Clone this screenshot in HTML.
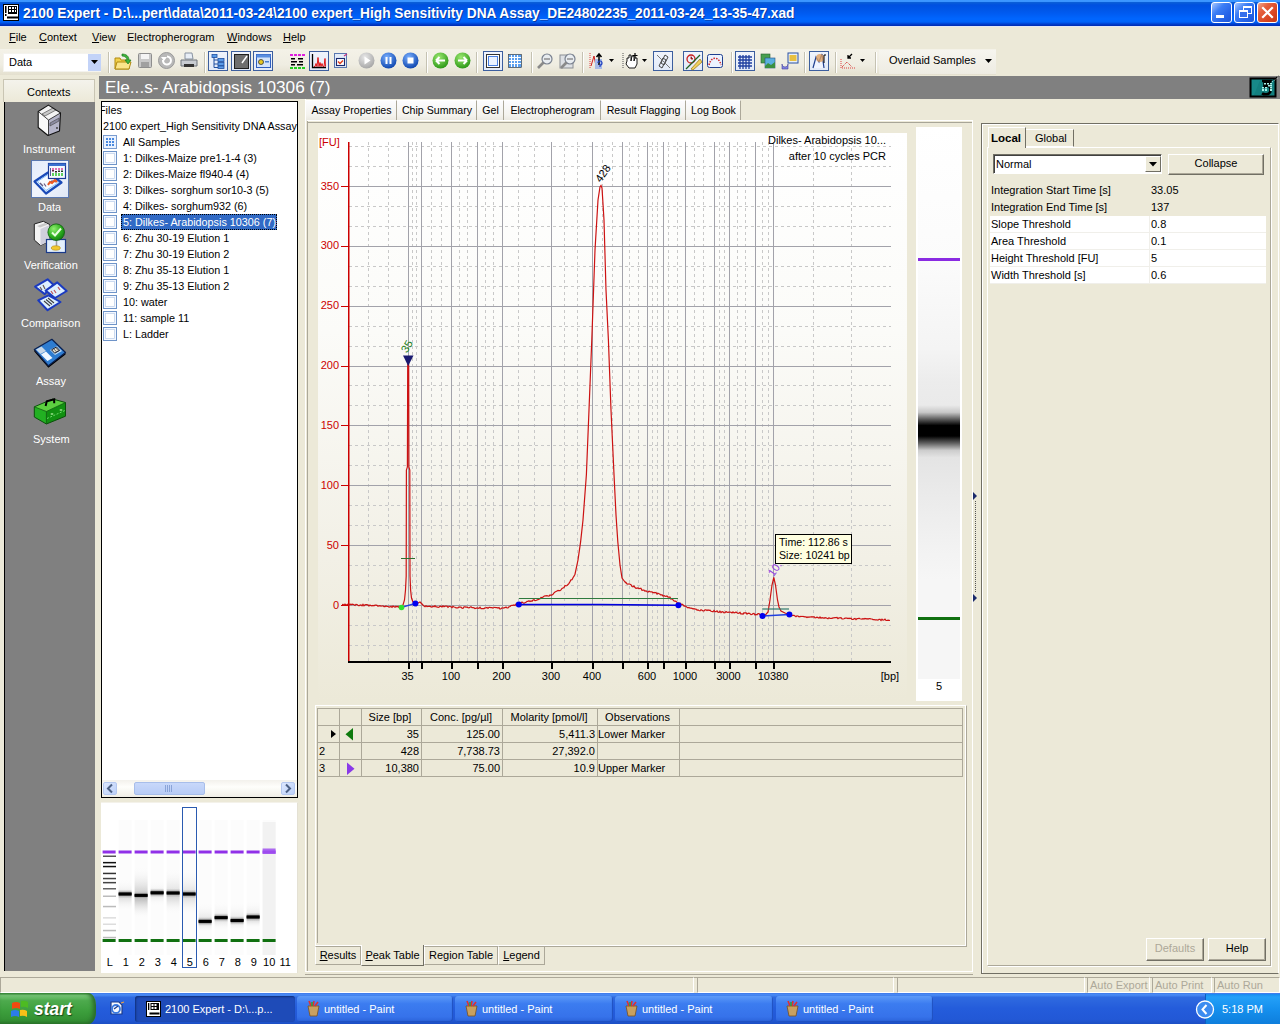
<!DOCTYPE html><html><head><meta charset="utf-8"><title>2100 Expert</title><style>
*{margin:0;padding:0;box-sizing:border-box}
html,body{width:1280px;height:1024px;overflow:hidden;background:#ECE9D8;font-family:"Liberation Sans",sans-serif;font-size:11px;color:#000}
.a{position:absolute}
.t{position:absolute;white-space:nowrap;line-height:1}
svg{position:absolute;overflow:visible}
</style></head><body>
<div class="a" style="left:0px;top:0px;width:1280px;height:26px;background:linear-gradient(#3D98FF 0px,#3A94FF 1.5px,#0A5ED8 2.5px,#0050E0 5px,#0055E6 9px,#005CF2 14px,#0066FF 19px,#0062F8 22px,#0040D0 24px,#0030B8 25.5px)"></div>
<div class="a" style="left:0px;top:26px;width:1280px;height:1px;background:#E4E8F4"></div>
<svg style="left:3px;top:4px" width="16" height="17" viewBox="0 0 16 17">
<rect x="0.5" y="0.5" width="15" height="16" fill="#fff" stroke="#000"/>
<rect x="5" y="2" width="9" height="8" fill="#000"/>
<g fill="#fff"><rect x="6" y="3" width="2" height="2"/><rect x="9" y="3" width="2" height="2"/><rect x="12" y="3" width="1" height="2"/><rect x="6" y="6" width="2" height="2"/><rect x="9" y="6" width="2" height="2"/><rect x="12" y="6" width="1" height="2"/></g>
<rect x="2" y="2" width="1.5" height="7" fill="#000"/><rect x="2" y="10" width="1.5" height="2" fill="#000"/>
<rect x="4" y="12.5" width="11" height="2" fill="#000"/>
</svg>
<div class="t" style="left:23px;top:7px;font-size:13.72px;color:#fff;font-weight:bold;text-shadow:1px 1px 0 #0A3AA0">2100 Expert - D:\...pert\data\2011-03-24\2100 expert_High Sensitivity DNA Assay_DE24802235_2011-03-24_13-35-47.xad</div>
<div class="a" style="left:1211px;top:2px;width:21px;height:21px;background:linear-gradient(135deg,#A8C8FF 0%,#3C7EF5 35%,#2664E8 70%,#1D56D8 100%);border:1px solid #fff;border-radius:3px"></div>
<div class="a" style="left:1234px;top:2px;width:21px;height:21px;background:linear-gradient(135deg,#A8C8FF 0%,#3C7EF5 35%,#2664E8 70%,#1D56D8 100%);border:1px solid #fff;border-radius:3px"></div>
<div class="a" style="left:1257px;top:2px;width:21px;height:21px;background:linear-gradient(135deg,#F0A890 0%,#E5603D 30%,#D84420 70%,#C23A18 100%);border:1px solid #fff;border-radius:3px"></div>
<div class="a" style="left:1216px;top:15px;width:8px;height:3px;background:#fff"></div>
<div class="a" style="left:1243px;top:6px;width:9px;height:8px;border:1px solid #fff;border-top-width:2px"></div>
<div class="a" style="left:1239px;top:10px;width:9px;height:8px;border:1px solid #fff;border-top-width:2px;background:#3570EC"></div>
<svg style="left:1261px;top:6px" width="13" height="13"><path d="M2 2L11 11M11 2L2 11" stroke="#fff" stroke-width="2.2" stroke-linecap="square"/></svg>
<div class="a" style="left:0px;top:27px;width:1280px;height:21px;background:#ECE9D8"></div>
<div class="t" style="left:9px;top:32px;font-size:11px;color:#000;"><u>F</u>ile</div>
<div class="t" style="left:39px;top:32px;font-size:11px;color:#000;"><u>C</u>ontext</div>
<div class="t" style="left:92px;top:32px;font-size:11px;color:#000;"><u>V</u>iew</div>
<div class="t" style="left:127px;top:32px;font-size:11px;color:#000;">Electropherogram</div>
<div class="t" style="left:227px;top:32px;font-size:11px;color:#000;"><u>W</u>indows</div>
<div class="t" style="left:283px;top:32px;font-size:11px;color:#000;"><u>H</u>elp</div>
<div class="a" style="left:0px;top:48px;width:1280px;height:28px;background:#ECE9D8"></div>
<div class="a" style="left:0px;top:49px;width:996px;height:26px;background:linear-gradient(#F4F2E8,#EFEDE2 60%,#E4E0CF)"></div>
<div class="a" style="left:3px;top:53px;width:98px;height:19px;background:#fff;border:1px solid #F4F3EE"></div>
<div class="a" style="left:88px;top:54px;width:13px;height:17px;background:#C3D3F8"></div>
<svg style="left:91px;top:60px" width="7" height="4"><path d="M0 0H7L3.5 4Z" fill="#000"/></svg>
<div class="t" style="left:9px;top:57px;font-size:11px;color:#000;">Data</div>
<div class="a" style="left:108px;top:52px;width:1px;height:21px;background:#C5C2B2"></div>
<div class="a" style="left:109px;top:52px;width:1px;height:21px;background:#fff"></div>
<div class="a" style="left:204px;top:52px;width:1px;height:21px;background:#C5C2B2"></div>
<div class="a" style="left:205px;top:52px;width:1px;height:21px;background:#fff"></div>
<div class="a" style="left:426px;top:52px;width:1px;height:21px;background:#C5C2B2"></div>
<div class="a" style="left:427px;top:52px;width:1px;height:21px;background:#fff"></div>
<div class="a" style="left:476px;top:52px;width:1px;height:21px;background:#C5C2B2"></div>
<div class="a" style="left:477px;top:52px;width:1px;height:21px;background:#fff"></div>
<div class="a" style="left:531px;top:52px;width:1px;height:21px;background:#C5C2B2"></div>
<div class="a" style="left:532px;top:52px;width:1px;height:21px;background:#fff"></div>
<div class="a" style="left:582px;top:52px;width:1px;height:21px;background:#C5C2B2"></div>
<div class="a" style="left:583px;top:52px;width:1px;height:21px;background:#fff"></div>
<div class="a" style="left:731px;top:52px;width:1px;height:21px;background:#C5C2B2"></div>
<div class="a" style="left:732px;top:52px;width:1px;height:21px;background:#fff"></div>
<div class="a" style="left:804px;top:52px;width:1px;height:21px;background:#C5C2B2"></div>
<div class="a" style="left:805px;top:52px;width:1px;height:21px;background:#fff"></div>
<div class="a" style="left:835px;top:52px;width:1px;height:21px;background:#C5C2B2"></div>
<div class="a" style="left:836px;top:52px;width:1px;height:21px;background:#fff"></div>
<div class="a" style="left:875px;top:52px;width:1px;height:21px;background:#C5C2B2"></div>
<div class="a" style="left:876px;top:52px;width:1px;height:21px;background:#fff"></div>
<svg style="left:114px;top:52px" width="18" height="18">
<path d="M1 6h5l1 2h8v9H1z" fill="#F2D04A" stroke="#B08A10"/><path d="M3 10h14l-2 7H1z" fill="#FBE58A" stroke="#B08A10"/>
<path d="M8 2c4 0 7 2 7 6l2 0-3 4-3-4h2c0-2-2-4-5-4z" fill="#3DB33D" stroke="#1E7A1E" stroke-width="0.7"/></svg>
<svg style="left:138px;top:53px" width="15" height="16"><rect x="0.5" y="0.5" width="13" height="14" rx="1" fill="#C8C8C8" stroke="#8E8E8E"/><rect x="3" y="1" width="8" height="5" fill="#F4F4F4"/><rect x="3" y="9" width="8" height="5" fill="#A0A0A0"/></svg>
<svg style="left:158px;top:52px" width="17" height="17"><circle cx="8.5" cy="8.5" r="8" fill="#B8B8B8" stroke="#9A9A9A"/><path d="M5 8a4 4 0 1 0 4-3.5" stroke="#fff" stroke-width="2" fill="none"/><path d="M3 5l3 4 3-4z" fill="#fff"/></svg>
<svg style="left:180px;top:52px" width="18" height="18"><path d="M5 1h7l1 6H5z" fill="#E8EEF6" stroke="#8892A0"/><path d="M1 8h16v6H1z" fill="#C8CCD2" stroke="#6E747C"/><rect x="4" y="12" width="10" height="3" fill="#333"/></svg>
<div class="a" style="left:208px;top:51px;width:20px;height:20px;background:linear-gradient(#F0F4FC,#E2EAF8);border:1px solid #3C5E9E"></div>
<div class="a" style="left:231px;top:51px;width:20px;height:20px;background:linear-gradient(#F0F4FC,#E2EAF8);border:1px solid #3C5E9E"></div>
<div class="a" style="left:253px;top:51px;width:20px;height:20px;background:linear-gradient(#F0F4FC,#E2EAF8);border:1px solid #3C5E9E"></div>
<svg style="left:211px;top:54px" width="15" height="15"><g fill="#5B9BE8" stroke="#1F4FA0" stroke-width="0.8"><rect x="1" y="0.5" width="5" height="3"/><rect x="7" y="4.5" width="6" height="3"/><rect x="7" y="8.5" width="6" height="3"/><rect x="7" y="12" width="6" height="2.5"/></g><path d="M3 3v10.5h4M3 6h4M3 10h4" stroke="#1F4FA0" fill="none"/></svg>
<svg style="left:234px;top:54px" width="15" height="15"><rect x="0.5" y="0.5" width="14" height="14" fill="#6E6E6E" stroke="#1F1F1F"/><path d="M8 9l5-7" stroke="#fff" stroke-width="1.5"/></svg>
<svg style="left:256px;top:54px" width="15" height="14"><rect x="0.5" y="0.5" width="14" height="13" fill="#D4E4FA" stroke="#2F5FBF"/><rect x="0.5" y="0.5" width="14" height="3" fill="#5A8EE0"/><circle cx="5" cy="8" r="2.5" fill="#E8C820" stroke="#333" stroke-width="0.8"/><rect x="9" y="7" width="4" height="1.5" fill="#4A7FD0"/></svg>
<svg style="left:290px;top:54px" width="15" height="16"><g fill="#E020E0"><rect x="0" y="0" width="3" height="2"/><rect x="4" y="0" width="3" height="2"/><rect x="8" y="0" width="3" height="2"/><rect x="12" y="0" width="3" height="2"/></g><g fill="#000"><rect x="1" y="4" width="4" height="1.5"/><rect x="8" y="4" width="5" height="1.5"/><rect x="1" y="7" width="6" height="1.5"/><rect x="9" y="7" width="4" height="1.5"/><rect x="1" y="10" width="4" height="1.5"/><rect x="7" y="10" width="6" height="1.5"/></g><g fill="#20D020"><rect x="0" y="13" width="3" height="2"/><rect x="4" y="13" width="3" height="2"/><rect x="8" y="13" width="3" height="2"/><rect x="12" y="13" width="3" height="2"/></g></svg>
<div class="a" style="left:309px;top:51px;width:20px;height:20px;background:linear-gradient(#F0F4FC,#E2EAF8);border:1px solid #3C5E9E"></div>
<svg style="left:311px;top:53px" width="16" height="16"><path d="M1.5 1v13.5H15" stroke="#000" stroke-width="1.3" fill="none"/><path d="M3 13.5h1l1-3 1 3 1-9 1 9 1-4 1 4 1-3 1 3h1l1-8 0.5 8" stroke="#E00000" fill="none" stroke-width="0.9"/></svg>
<svg style="left:334px;top:53px" width="14" height="16"><rect x="0.5" y="0.5" width="12" height="14" fill="#E4ECF8" stroke="#5A78B0"/><rect x="2.5" y="5.5" width="8" height="7" fill="#fff" stroke="#1A2A70" stroke-width="1.1"/><path d="M4 8.5l2 2 3-3" stroke="#E04020" stroke-width="1.5" fill="none"/><path d="M10 3l3-2" stroke="#C03080" stroke-width="1.2"/></svg>
<svg style="left:358px;top:52px" width="17" height="17"><defs><radialGradient id="g358" cx="0.4" cy="0.3" r="0.7"><stop offset="0" stop-color="#E8E8E8"/><stop offset="1" stop-color="#A8A8A8"/></radialGradient></defs><circle cx="8.5" cy="8.5" r="8" fill="url(#g358)"/><path d="M6.5 4.5l6 4-6 4z" fill="#fff"/></svg>
<svg style="left:380px;top:52px" width="17" height="17"><defs><radialGradient id="g380" cx="0.4" cy="0.3" r="0.7"><stop offset="0" stop-color="#7AB0FF"/><stop offset="1" stop-color="#1048B0"/></radialGradient></defs><circle cx="8.5" cy="8.5" r="8" fill="url(#g380)"/><rect x="5.5" y="5" width="2" height="7" fill="#fff"/><rect x="9.5" y="5" width="2" height="7" fill="#fff"/></svg>
<svg style="left:402px;top:52px" width="17" height="17"><defs><radialGradient id="g402" cx="0.4" cy="0.3" r="0.7"><stop offset="0" stop-color="#7AB0FF"/><stop offset="1" stop-color="#1048B0"/></radialGradient></defs><circle cx="8.5" cy="8.5" r="8" fill="url(#g402)"/><rect x="5.5" y="5.5" width="6" height="6" fill="#fff"/></svg>
<svg style="left:432px;top:52px" width="17" height="17"><defs><radialGradient id="g432" cx="0.4" cy="0.3" r="0.7"><stop offset="0" stop-color="#9BE870"/><stop offset="1" stop-color="#2E9A18"/></radialGradient></defs><circle cx="8.5" cy="8.5" r="8" fill="url(#g432)"/><path d="M4 8.5h9M4 8.5l3.5-3.5M4 8.5l3.5 3.5" stroke="#fff" stroke-width="2" fill="none"/></svg>
<svg style="left:454px;top:52px" width="17" height="17"><defs><radialGradient id="g454" cx="0.4" cy="0.3" r="0.7"><stop offset="0" stop-color="#9BE870"/><stop offset="1" stop-color="#2E9A18"/></radialGradient></defs><circle cx="8.5" cy="8.5" r="8" fill="url(#g454)"/><path d="M4 8.5h9M13 8.5l-3.5-3.5M13 8.5l-3.5 3.5" stroke="#fff" stroke-width="2" fill="none"/></svg>
<div class="a" style="left:483px;top:51px;width:20px;height:20px;background:linear-gradient(#F0F4FC,#E2EAF8);border:1px solid #3C5E9E"></div>
<svg style="left:486px;top:54px" width="15" height="15"><rect x="0.5" y="0.5" width="13" height="13" fill="#fff" stroke="#333"/><rect x="2.5" y="2.5" width="9" height="9" fill="#EAF2FF" stroke="#4A80E0"/></svg>
<svg style="left:508px;top:54px" width="14" height="14"><rect x="0.5" y="0.5" width="13" height="13" fill="#5BA0F0" stroke="#333" stroke-width="0.6"/><path d="M3.5 1v12M6.5 1v12M9.5 1v12M1 3.5h12M1 6.5h12M1 9.5h12" stroke="#fff"/></svg>
<svg style="left:536px;top:52px" width="18" height="18"><circle cx="11" cy="7" r="5" fill="#E8ECF0" stroke="#7A8290" stroke-width="1.2"/><path d="M8 7h6" stroke="#777" stroke-width="1.2"/><path d="M7.5 10.5L2 16" stroke="#8A8A8A" stroke-width="2.6"/></svg>
<svg style="left:559px;top:52px" width="18" height="18"><rect x="1" y="3" width="13" height="13" fill="#DDE0E4" stroke="#8A8E94"/><circle cx="11" cy="7" r="5" fill="#E8ECF0" stroke="#7A8290" stroke-width="1.2"/><path d="M8 7h6" stroke="#777" stroke-width="1.2"/><path d="M7.5 10.5L2 16" stroke="#8A8A8A" stroke-width="2.6"/></svg>
<svg style="left:589px;top:52px" width="28" height="18"><path d="M1 1v16" stroke="#E04040" stroke-dasharray="1 1"/><path d="M2 14l3-10 2 10" stroke="#D02020" fill="none"/><rect x="6" y="7" width="7" height="10" fill="#A8BCE8"/><path d="M10 13V2M7.5 5L10 2l2.5 3" stroke="#000" stroke-width="1.5" fill="none"/><path d="M9 11a2 2 0 1 1 2 2v2" stroke="#2040C0" stroke-width="1.2" fill="none"/><path d="M20 7h5l-2.5 3z" fill="#000"/></svg>
<svg style="left:622px;top:52px" width="28" height="18"><path d="M1 1v16" stroke="#555" stroke-dasharray="1 1"/><path d="M5 9v-3h2v-3h2v6l1-5h2v5l1-3h2v6l-2 4H7L4 12z" fill="#fff" stroke="#000" stroke-width="0.9"/><path d="M13 1v5M10.5 3.5h5" stroke="#000" stroke-width="1.2"/><path d="M20 7h5l-2.5 3z" fill="#000"/></svg>
<div class="a" style="left:653px;top:51px;width:20px;height:20px;background:linear-gradient(#F0F4FC,#E2EAF8);border:1px solid #3C5E9E"></div>
<svg style="left:656px;top:54px" width="15" height="15"><path d="M3 12l4-8 3 2-4 8z" fill="none" stroke="#444"/><path d="M12 3L8 11l-3-2 4-8z" fill="none" stroke="#444"/><path d="M1 1l13 13" stroke="#777"/></svg>
<div class="a" style="left:683px;top:51px;width:20px;height:20px;background:linear-gradient(#F0F4FC,#E2EAF8);border:1px solid #3C5E9E"></div>
<svg style="left:685px;top:54px" width="16" height="16"><circle cx="6" cy="5" r="4" fill="none" stroke="#C82020" stroke-width="1.3"/><path d="M6 2.5v2.5h2" stroke="#C82020"/><path d="M6 15L15 5l2 3-9 8z" fill="#F0D060" stroke="#A08020" stroke-width="0.8"/><path d="M1 15L15 1" stroke="#206020" stroke-width="1.3"/></svg>
<svg style="left:707px;top:54px" width="16" height="14"><rect x="0.5" y="0.5" width="15" height="13" rx="2" fill="#EAF2FF" stroke="#1F3F8F"/><path d="M2 11C4 2 12 2 14 11" stroke="#D02020" stroke-dasharray="1.5 1.2" stroke-width="1.5" fill="none"/></svg>
<div class="a" style="left:735px;top:51px;width:20px;height:20px;background:linear-gradient(#F0F4FC,#E2EAF8);border:1px solid #3C5E9E"></div>
<svg style="left:737px;top:54px" width="16" height="16"><path d="M3 1v14M6 1v14M9 1v14M12 1v14M1 3h14M1 6h14M1 9h14M1 12h14" stroke="#1F3FA0" stroke-width="1.3"/></svg>
<svg style="left:760px;top:53px" width="16" height="16"><rect x="1" y="1" width="9" height="9" fill="#48A050" stroke="#2A6030" stroke-width="0.6"/><rect x="5" y="5" width="10" height="10" fill="#5AB0E0" stroke="#2A5080" stroke-width="0.6"/><path d="M5 13l3-3 3 2 4-3v6H5z" fill="#3C9040"/></svg>
<svg style="left:781px;top:52px" width="18" height="18"><rect x="7" y="1" width="10" height="10" fill="#E8F0FA" stroke="#2A50A0"/><rect x="8.5" y="3" width="7" height="6" fill="#E8C040"/><path d="M1 12a3 3 0 0 0 6 0v5H1z" fill="#8080E0" stroke="#4040A0" stroke-width="0.6"/></svg>
<div class="a" style="left:809px;top:51px;width:20px;height:20px;background:linear-gradient(#F0F4FC,#E2EAF8);border:1px solid #3C5E9E"></div>
<svg style="left:811px;top:53px" width="16" height="16"><path d="M2 15L5 4l3 5 3-8 2 14" fill="#F0F4FF" stroke="#1F3F8F" stroke-width="1.2"/><circle cx="9" cy="5" r="4" fill="#E0A060" opacity="0.8"/><path d="M13 2h2M13 2v8" stroke="#000"/></svg>
<svg style="left:840px;top:52px" width="28" height="18"><path d="M1 7v9h14" stroke="#E04040" stroke-dasharray="1 1" fill="none"/><path d="M2 15l5-5 5 5" stroke="#D02020" stroke-dasharray="1 1" fill="none"/><path d="M12 2L8 6M8 3v3h3" stroke="#000" stroke-width="1.3" fill="none"/><path d="M20 7h5l-2.5 3z" fill="#000"/></svg>
<div class="a" style="left:879px;top:50px;width:117px;height:24px;background:linear-gradient(#F6F5EF,#EEECE3)"></div>
<div class="t" style="left:889px;top:55px;font-size:11px;color:#000;">Overlaid Samples</div>
<svg style="left:985px;top:59px" width="7" height="4"><path d="M0 0H7L3.5 4Z" fill="#000"/></svg>
<div class="a" style="left:99px;top:76px;width:1181px;height:23px;background:#808080"></div>
<div class="t" style="left:105px;top:79px;font-size:17.2px;color:#fff;">Ele...s- Arabidopsis 10306 (7)</div>
<svg style="left:1249px;top:75px" width="31" height="23"><rect x="1.5" y="3.5" width="25" height="18" fill="#138080" stroke="#000" stroke-width="2"/><path d="M3 5h8l-6 15H3z" fill="#1A9090" opacity="0.6"/><path d="M13 6h8v2.5h-5.5v3q1-0.7 2.5-0.7 3.5 0 3.5 4 0 4.5-4.5 4.5-2.5 0-4-1" fill="none" stroke="#000" stroke-width="2.6"/><g fill="#A8F0E8"><rect x="15" y="8" width="2" height="1.5"/><rect x="18" y="8" width="2" height="1.5"/><rect x="21" y="8" width="2" height="1.5"/><rect x="19" y="10" width="2" height="1.5"/><rect x="21" y="10" width="2" height="1.5"/><rect x="13" y="12" width="2" height="1.5"/><rect x="16" y="12" width="2" height="1.5"/><rect x="21" y="12" width="2" height="1.5"/><rect x="13" y="14" width="2" height="2"/><rect x="16" y="14" width="2" height="2"/><rect x="21" y="14" width="2" height="2"/></g><path d="M22 6l8-5" stroke="#000" stroke-width="1.3" stroke-dasharray="1.5 1.5"/><path d="M23 7l7-5" stroke="#fff" stroke-width="0.8" stroke-dasharray="1 2"/></svg>
<div class="a" style="left:0px;top:977px;width:1280px;height:16px;background:#ECE9D8;border-top:1px solid #ACA899"></div>
<div class="a" style="left:0px;top:977px;width:694px;height:16px;border-top:1px solid #ACA899;border-left:1px solid #ACA899;border-bottom:1px solid #fff;border-right:1px solid #fff"></div>
<div class="a" style="left:697px;top:977px;width:197px;height:16px;border-top:1px solid #ACA899;border-left:1px solid #ACA899;border-bottom:1px solid #fff;border-right:1px solid #fff"></div>
<div class="a" style="left:897px;top:977px;width:188px;height:16px;border-top:1px solid #ACA899;border-left:1px solid #ACA899;border-bottom:1px solid #fff;border-right:1px solid #fff"></div>
<div class="a" style="left:1087px;top:977px;width:63px;height:16px;border-top:1px solid #ACA899;border-left:1px solid #ACA899;border-bottom:1px solid #fff;border-right:1px solid #fff"></div>
<div class="t" style="left:1090px;top:980px;font-size:11px;color:#ACA899;">Auto Export</div>
<div class="a" style="left:1152px;top:977px;width:60px;height:16px;border-top:1px solid #ACA899;border-left:1px solid #ACA899;border-bottom:1px solid #fff;border-right:1px solid #fff"></div>
<div class="t" style="left:1155px;top:980px;font-size:11px;color:#ACA899;">Auto Print</div>
<div class="a" style="left:1214px;top:977px;width:66px;height:16px;border-top:1px solid #ACA899;border-left:1px solid #ACA899;border-bottom:1px solid #fff;border-right:1px solid #fff"></div>
<div class="t" style="left:1217px;top:980px;font-size:11px;color:#ACA899;">Auto Run</div>
<div class="a" style="left:0px;top:993px;width:1280px;height:31px;background:linear-gradient(#3D78E8 0%,#4A8CF6 6%,#2F6AE0 14%,#245CDB 50%,#2258D6 85%,#1C4FC4 100%)"></div>
<div class="a" style="left:0;top:993px;width:96px;height:31px;border-radius:0 8px 8px 0/0 12px 12px 0;background:linear-gradient(#3C963C 0%,#78C878 8%,#4DAA4D 25%,#3C9E3C 60%,#338F33 90%,#2A7A2A 100%);box-shadow:inset -3px 0 4px #2A6A2A"></div>
<svg style="left:10px;top:1000px" width="20" height="19"><path d="M2 3q4-2 8 0v6q-4-2-8 0z" fill="#F04A10"/><path d="M11 1q4-1 7 1v6q-3-2-7-1z" fill="#4DBB22"/><path d="M1 11q4-2 8 0v6q-4-2-8 0z" fill="#2C7CE8"/><path d="M10 10q4-1 7 1v6q-3-2-7-1z" fill="#F8C018"/></svg>
<div class="t" style="left:34px;top:1001px;font-size:17.5px;color:#fff;font-weight:bold;font-style:italic;text-shadow:1px 1px 1px #1A4A1A">start</div>
<svg style="left:108px;top:1000px" width="17" height="16"><path d="M3 2h8l3 3v9H3z" fill="#F4F8FF" stroke="#1A3A8A" stroke-width="1.2"/><circle cx="8" cy="9" r="4" fill="none" stroke="#3A7AE0" stroke-width="1.8"/><path d="M6 9l4-3" stroke="#1A3A8A" stroke-width="1.3"/><path d="M13 3l3-1" stroke="#F0A040" stroke-width="1.2"/></svg>
<div class="a" style="left:135px;top:996px;width:160px;height:26px;background:#1E4BB8;border-radius:3px;box-shadow:inset 1px 1px 2px #10307A"></div>
<svg style="left:146px;top:1001px" width="15" height="16"><rect x="0.5" y="0.5" width="14" height="15" fill="#fff" stroke="#000"/><rect x="4.5" y="2" width="8.5" height="7" fill="#000"/><g fill="#fff"><rect x="5.5" y="3" width="2" height="2"/><rect x="8.5" y="3" width="2" height="2"/><rect x="5.5" y="6" width="2" height="2"/><rect x="8.5" y="6" width="2" height="2"/></g><rect x="2" y="2" width="1.3" height="7" fill="#000"/><rect x="3.5" y="11.5" width="10" height="2" fill="#000"/></svg>
<div class="t" style="left:165px;top:1004px;font-size:11px;color:#fff;">2100 Expert - D:\...p...</div>
<div class="a" style="left:297px;top:996px;width:156px;height:26px;background:linear-gradient(#5C9AF8,#3C7CF0 30%,#3672EA 80%,#2A62D8);border-radius:3px;box-shadow:inset -1px -1px 1px #1F4FBF"></div>
<svg style="left:306px;top:1001px" width="15" height="16"><path d="M2 5h11l-2 10H4z" fill="#C8A060" stroke="#7A5020" stroke-width="0.8"/><path d="M5 5l-2-5M7 5l1-5M9 5l3-4" stroke="#E03030" stroke-width="1.6"/><path d="M6 5l0-4" stroke="#30A030" stroke-width="1.5"/></svg>
<div class="t" style="left:324px;top:1004px;font-size:11px;color:#fff;">untitled - Paint</div>
<div class="a" style="left:455px;top:996px;width:158px;height:26px;background:linear-gradient(#5C9AF8,#3C7CF0 30%,#3672EA 80%,#2A62D8);border-radius:3px;box-shadow:inset -1px -1px 1px #1F4FBF"></div>
<svg style="left:464px;top:1001px" width="15" height="16"><path d="M2 5h11l-2 10H4z" fill="#C8A060" stroke="#7A5020" stroke-width="0.8"/><path d="M5 5l-2-5M7 5l1-5M9 5l3-4" stroke="#E03030" stroke-width="1.6"/><path d="M6 5l0-4" stroke="#30A030" stroke-width="1.5"/></svg>
<div class="t" style="left:482px;top:1004px;font-size:11px;color:#fff;">untitled - Paint</div>
<div class="a" style="left:615px;top:996px;width:158px;height:26px;background:linear-gradient(#5C9AF8,#3C7CF0 30%,#3672EA 80%,#2A62D8);border-radius:3px;box-shadow:inset -1px -1px 1px #1F4FBF"></div>
<svg style="left:624px;top:1001px" width="15" height="16"><path d="M2 5h11l-2 10H4z" fill="#C8A060" stroke="#7A5020" stroke-width="0.8"/><path d="M5 5l-2-5M7 5l1-5M9 5l3-4" stroke="#E03030" stroke-width="1.6"/><path d="M6 5l0-4" stroke="#30A030" stroke-width="1.5"/></svg>
<div class="t" style="left:642px;top:1004px;font-size:11px;color:#fff;">untitled - Paint</div>
<div class="a" style="left:776px;top:996px;width:157px;height:26px;background:linear-gradient(#5C9AF8,#3C7CF0 30%,#3672EA 80%,#2A62D8);border-radius:3px;box-shadow:inset -1px -1px 1px #1F4FBF"></div>
<svg style="left:785px;top:1001px" width="15" height="16"><path d="M2 5h11l-2 10H4z" fill="#C8A060" stroke="#7A5020" stroke-width="0.8"/><path d="M5 5l-2-5M7 5l1-5M9 5l3-4" stroke="#E03030" stroke-width="1.6"/><path d="M6 5l0-4" stroke="#30A030" stroke-width="1.5"/></svg>
<div class="t" style="left:803px;top:1004px;font-size:11px;color:#fff;">untitled - Paint</div>
<div class="a" style="left:1205px;top:994px;width:75px;height:30px;background:linear-gradient(#1A8AF0 0%,#24A0F8 10%,#1590EE 50%,#0E7EDC 100%);border-left:1px solid #0D5FC0"></div>
<svg style="left:1195px;top:1000px" width="20" height="19"><circle cx="10" cy="9.5" r="8.5" fill="#3C8CF0" stroke="#fff" stroke-width="1.3"/><path d="M11.5 5l-4 4.5 4 4.5" stroke="#fff" stroke-width="2" fill="none"/></svg>
<div class="t" style="left:1222px;top:1004px;font-size:11px;color:#fff;">5:18 PM</div>
<div class="a" style="left:3px;top:79px;width:92px;height:23px;background:linear-gradient(#F4F3EC,#ECE9D8);border:1px solid #C9C5B3;border-bottom:none"></div>
<div class="t" style="left:27px;top:87px;font-size:11px;color:#000;">Contexts</div>
<div class="a" style="left:4px;top:102px;width:91px;height:869px;background:#808080;border-left:1px solid #000"></div>
<svg style="left:36px;top:103px" width="27" height="34"><path d="M2.2 8.5L12.4 2.1 24.5 9.9 12.5 17z" fill="#F4F4F4"/><path d="M2.2 8.5L12.5 17 12 32.5 2.2 24.5z" fill="#FAFAFA"/><path d="M12.5 17L24.5 9.9 23.5 28 12 32.5z" fill="#B4B4C8"/><path d="M6 11l11-6 3 2-11 6z" fill="#C8C8C8" stroke="#555" stroke-width="0.7"/><path d="M14 20l9-5v3l-9 5z" fill="#8A8AA0" stroke="#444" stroke-width="0.6"/><circle cx="21" cy="25" r="0.9" fill="#333"/><path d="M2.2 8.5L12.4 2.1 24.5 9.9 23.5 28 12 32.5 2.2 24.5z" fill="none" stroke="#111" stroke-width="1.1" stroke-linejoin="round"/><path d="M2.2 8.5L12.5 17 24.5 9.9M12.5 17V32.5" fill="none" stroke="#222" stroke-width="0.8"/></svg>
<div class="t" style="left:23px;top:144px;font-size:11px;color:#fff;">Instrument</div>
<div class="a" style="left:31px;top:160px;width:38px;height:38px;background:linear-gradient(135deg,#E4ECFA,#F0F4FC 50%,#E0E8F6);border:1px solid #5A78B0"></div>
<svg style="left:28px;top:156px" width="44" height="44"><path d="M6.5 25.5L20 16.5 33.5 26.5 18 37.5z" fill="#E8F4FF" stroke="#1A4AB8" stroke-width="2.2" stroke-linejoin="round"/><path d="M9.5 25.5L20 18.5 30.5 26.5 18 34.5z" fill="#F6FAFF" stroke="#6AB0F8" stroke-width="0.8"/><path d="M12 27l3 3M16 27.5l2 3M20 28l4-3 4 1" stroke="#6A5A80" stroke-width="1.2" fill="none"/><path d="M20 29l2-3 2 1 3-3 2 2" stroke="#F05A20" stroke-width="2" fill="none"/><rect x="20.5" y="7.5" width="17" height="15" fill="#F4F8FF" stroke="#1A3A98" stroke-width="1.2"/><rect x="20.5" y="7.5" width="17" height="2.5" fill="#3A70D0"/><g><rect x="22" y="12" width="1" height="8" fill="#5A5A9A"/><rect x="24" y="12" width="2" height="2" fill="#E070B0"/><rect x="24" y="14" width="2" height="1.5" fill="#602040"/><rect x="24" y="17" width="2" height="3" fill="#60D060"/><rect x="27" y="12" width="2" height="2" fill="#E070B0"/><rect x="27" y="15" width="2" height="1.5" fill="#302020"/><rect x="27" y="17" width="2" height="3" fill="#60D060"/><rect x="30" y="12" width="2" height="2" fill="#E070B0"/><rect x="30" y="14.5" width="2" height="1.5" fill="#403030"/><rect x="30" y="17" width="2" height="3" fill="#60D060"/><rect x="33" y="12" width="2" height="2" fill="#E070B0"/><rect x="33" y="14.5" width="2" height="1.5" fill="#204020"/><rect x="33" y="17" width="2" height="3" fill="#60D060"/></g></svg>
<div class="t" style="left:38px;top:202px;font-size:11px;color:#fff;">Data</div>
<svg style="left:30px;top:217px" width="40" height="40"><path d="M4.3 7L13.3 4.3 19.5 7.4 19.5 24 10.5 28.5 4.3 23z" fill="#F2F2F2" stroke="#222" stroke-width="1"/><path d="M7 9l8-3 3 1.5-8 3z" fill="#C8C8C8"/><path d="M10.5 12L19.5 8V24L10.5 28.5z" fill="#D0D0DC"/><rect x="16.5" y="22.5" width="19" height="13" fill="#E4F0FC" stroke="#1A3A8A" stroke-width="1.2"/><path d="M26.5 22v7" stroke="#9A9AA0" stroke-width="1.5"/><ellipse cx="25.8" cy="31" rx="4.5" ry="2.2" fill="#F0C830" stroke="#B08A10" stroke-width="0.6"/><defs><radialGradient id="vg" cx="0.35" cy="0.3" r="0.75"><stop offset="0" stop-color="#90F070"/><stop offset="0.6" stop-color="#30B020"/><stop offset="1" stop-color="#108010"/></radialGradient></defs><circle cx="26.2" cy="15.2" r="8.3" fill="url(#vg)" stroke="#0A600A" stroke-width="0.8"/><path d="M22 15.5l3 3 6-7" stroke="#E8FFE0" stroke-width="2" fill="none"/></svg>
<div class="t" style="left:24px;top:260px;font-size:11px;color:#fff;">Verification</div>
<svg style="left:30px;top:275px" width="40" height="40"><path d="M5.1,11.7 L17.6,4.3 L23.4,9.8 L14.8,19.1z" fill="#DDF0FF" stroke="#1A3AC0" stroke-width="2" stroke-linejoin="round"/><path d="M10 12l2 3M13 10l2 4" stroke="#6A5A50" stroke-width="1.2"/><path d="M15.6,15.6 L27.3,7.4 L36.7,16 L25,23z" fill="#DDF0FF" stroke="#1A3AC0" stroke-width="2" stroke-linejoin="round"/><path d="M21 16l2 3M24 15l2 3M28 12l2 3" stroke="#C05A60" stroke-width="1.3"/><path d="M8.2,25.4 L18.4,20.3 L30.5,27 L17.6,35.2z" fill="#DDF0FF" stroke="#1A3AC0" stroke-width="2" stroke-linejoin="round"/><path d="M14 26l6 5M16 24.5l6 5M18 23l6 5" stroke="#404040" stroke-width="1.1"/></svg>
<div class="t" style="left:21px;top:318px;font-size:11px;color:#fff;">Comparison</div>
<svg style="left:30px;top:333px" width="40" height="40"><path d="M4.3 18.5L18.4 34.8 35.5 21.5 35.5 19.5 18.4 32.8 4.3 16.4z" fill="#000"/><path d="M4.3 16.4L21.9 6.25 35.5 19.5 18.4 32.8z" fill="#2E7CD0" stroke="#0A2050" stroke-width="1.2" stroke-linejoin="round"/><path d="M6 16.5L11.5 13.5 16 18 10.5 21z" fill="#C8D8E8"/><path d="M11 21.5L16 18.5 22.5 25 17.5 28z" fill="#F0F8FF"/><path d="M20 17l7-4 5 5-7 4z" fill="#BFDDF8"/><path d="M21.5 16.8l5-2.8 3.2 3.4-5 2.8z" fill="#E8E0C8" stroke="#101830" stroke-width="1"/><path d="M23.5 15.6l3.2 3.4M25.5 14.6l3.2 3.4" stroke="#101830" stroke-width="0.6"/></svg>
<div class="t" style="left:36px;top:376px;font-size:11px;color:#fff;">Assay</div>
<svg style="left:30px;top:392px" width="40" height="40"><path d="M4.3 14.8L16.4 19.5 16.4 32 4.3 25z" fill="#22B022"/><path d="M16.4 19.5L35.5 10.5 35.5 24.2 16.4 32z" fill="#119011"/><path d="M4.3 14.8L22.7 7 35.5 10.5 16.4 19.5z" fill="#5CD040"/><path d="M4.3 14.8L22.7 7 35.5 10.5 35.5 24.2 16.4 32 4.3 25z" fill="none" stroke="#0A500A" stroke-width="1"/><path d="M4.3 14.8L16.4 19.5 35.5 10.5M16.4 19.5V32" fill="none" stroke="#0A600A" stroke-width="0.8"/><path d="M17 26.5l18-8" stroke="#70E070" stroke-width="0.9" stroke-dasharray="2 1.5"/><ellipse cx="22" cy="22" rx="1.5" ry="0.8" fill="#B0F0A0"/><ellipse cx="31" cy="18" rx="1.5" ry="0.8" fill="#B0F0A0"/><path d="M15.6 14l1.2-4.8 7.4-2v4" fill="none" stroke="#000" stroke-width="2"/></svg>
<div class="t" style="left:33px;top:434px;font-size:11px;color:#fff;">System</div>
<div class="a" style="left:101px;top:101px;width:197px;height:697px;background:#fff;border:1px solid #000"></div>
<div class="a" style="left:102px;top:102px;width:195px;height:16px;overflow:hidden"><div class="t" style="left:-3px;top:3px;font-size:10.8px">Files</div></div>
<div class="a" style="left:102px;top:118px;width:195px;height:16px;overflow:hidden"><div class="t" style="left:1px;top:3px;font-size:10.8px">2100 expert_High Sensitivity DNA Assay</div></div>
<svg style="left:103px;top:135px" width="14" height="14"><rect x="0.5" y="0.5" width="13" height="13" fill="#EAF2FF" stroke="#7A9CD0"/><g fill="#4A8AE0"><rect x="3" y="3" width="2" height="2"/><rect x="6" y="3" width="2" height="2"/><rect x="9" y="3" width="2" height="2"/><rect x="3" y="6" width="2" height="2"/><rect x="6" y="6" width="2" height="2"/><rect x="9" y="6" width="2" height="2"/><rect x="3" y="9" width="2" height="2"/><rect x="6" y="9" width="2" height="2"/><rect x="9" y="9" width="2" height="2"/></g></svg>
<div class="t" style="left:123px;top:137px;font-size:10.8px;color:#000;">All Samples</div>
<svg style="left:103px;top:151px" width="14" height="14"><rect x="0.5" y="0.5" width="13" height="13" fill="#F4F8FF" stroke="#6F94C8"/><rect x="2.5" y="2.5" width="9" height="9" fill="#fff" stroke="#B8CCE8" stroke-width="0.7"/></svg>
<div class="t" style="left:123px;top:153px;font-size:10.8px;color:#000;">1: Dilkes-Maize pre1-1-4 (3)</div>
<svg style="left:103px;top:167px" width="14" height="14"><rect x="0.5" y="0.5" width="13" height="13" fill="#F4F8FF" stroke="#6F94C8"/><rect x="2.5" y="2.5" width="9" height="9" fill="#fff" stroke="#B8CCE8" stroke-width="0.7"/></svg>
<div class="t" style="left:123px;top:169px;font-size:10.8px;color:#000;">2: Dilkes-Maize fl940-4 (4)</div>
<svg style="left:103px;top:183px" width="14" height="14"><rect x="0.5" y="0.5" width="13" height="13" fill="#F4F8FF" stroke="#6F94C8"/><rect x="2.5" y="2.5" width="9" height="9" fill="#fff" stroke="#B8CCE8" stroke-width="0.7"/></svg>
<div class="t" style="left:123px;top:185px;font-size:10.8px;color:#000;">3: Dilkes- sorghum sor10-3 (5)</div>
<svg style="left:103px;top:199px" width="14" height="14"><rect x="0.5" y="0.5" width="13" height="13" fill="#F4F8FF" stroke="#6F94C8"/><rect x="2.5" y="2.5" width="9" height="9" fill="#fff" stroke="#B8CCE8" stroke-width="0.7"/></svg>
<div class="t" style="left:123px;top:201px;font-size:10.8px;color:#000;">4: Dilkes- sorghum932 (6)</div>
<svg style="left:103px;top:215px" width="14" height="14"><rect x="0.5" y="0.5" width="13" height="13" fill="#F4F8FF" stroke="#6F94C8"/><rect x="2.5" y="2.5" width="9" height="9" fill="#fff" stroke="#B8CCE8" stroke-width="0.7"/></svg>
<div class="a" style="left:121px;top:214px;width:156px;height:16px;background:#316AC5;outline:1px dotted #000;outline-offset:-1px"></div>
<div class="t" style="left:123px;top:217px;font-size:10.8px;color:#fff;">5: Dilkes- Arabidopsis 10306 (7)</div>
<svg style="left:103px;top:231px" width="14" height="14"><rect x="0.5" y="0.5" width="13" height="13" fill="#F4F8FF" stroke="#6F94C8"/><rect x="2.5" y="2.5" width="9" height="9" fill="#fff" stroke="#B8CCE8" stroke-width="0.7"/></svg>
<div class="t" style="left:123px;top:233px;font-size:10.8px;color:#000;">6: Zhu 30-19 Elution 1</div>
<svg style="left:103px;top:247px" width="14" height="14"><rect x="0.5" y="0.5" width="13" height="13" fill="#F4F8FF" stroke="#6F94C8"/><rect x="2.5" y="2.5" width="9" height="9" fill="#fff" stroke="#B8CCE8" stroke-width="0.7"/></svg>
<div class="t" style="left:123px;top:249px;font-size:10.8px;color:#000;">7: Zhu 30-19 Elution 2</div>
<svg style="left:103px;top:263px" width="14" height="14"><rect x="0.5" y="0.5" width="13" height="13" fill="#F4F8FF" stroke="#6F94C8"/><rect x="2.5" y="2.5" width="9" height="9" fill="#fff" stroke="#B8CCE8" stroke-width="0.7"/></svg>
<div class="t" style="left:123px;top:265px;font-size:10.8px;color:#000;">8: Zhu 35-13 Elution 1</div>
<svg style="left:103px;top:279px" width="14" height="14"><rect x="0.5" y="0.5" width="13" height="13" fill="#F4F8FF" stroke="#6F94C8"/><rect x="2.5" y="2.5" width="9" height="9" fill="#fff" stroke="#B8CCE8" stroke-width="0.7"/></svg>
<div class="t" style="left:123px;top:281px;font-size:10.8px;color:#000;">9: Zhu 35-13 Elution 2</div>
<svg style="left:103px;top:295px" width="14" height="14"><rect x="0.5" y="0.5" width="13" height="13" fill="#F4F8FF" stroke="#6F94C8"/><rect x="2.5" y="2.5" width="9" height="9" fill="#fff" stroke="#B8CCE8" stroke-width="0.7"/></svg>
<div class="t" style="left:123px;top:297px;font-size:10.8px;color:#000;">10: water</div>
<svg style="left:103px;top:311px" width="14" height="14"><rect x="0.5" y="0.5" width="13" height="13" fill="#F4F8FF" stroke="#6F94C8"/><rect x="2.5" y="2.5" width="9" height="9" fill="#fff" stroke="#B8CCE8" stroke-width="0.7"/></svg>
<div class="t" style="left:123px;top:313px;font-size:10.8px;color:#000;">11: sample 11</div>
<svg style="left:103px;top:327px" width="14" height="14"><rect x="0.5" y="0.5" width="13" height="13" fill="#F4F8FF" stroke="#6F94C8"/><rect x="2.5" y="2.5" width="9" height="9" fill="#fff" stroke="#B8CCE8" stroke-width="0.7"/></svg>
<div class="t" style="left:123px;top:329px;font-size:10.8px;color:#000;">L: Ladder</div>
<div class="a" style="left:102px;top:780px;width:195px;height:17px;background:linear-gradient(#F3F1EC,#FEFEFB 40%,#F0EEE6)"></div>
<div class="a" style="left:103px;top:782px;width:14px;height:13px;background:linear-gradient(135deg,#DDE8FF,#BCD0F8);border:1px solid #B5C8F0;border-radius:2px"></div>
<svg style="left:103px;top:782px" width="14" height="13"><path d="M9 2.5L5 6.5l4 4" stroke="#4D6185" stroke-width="2" fill="none"/></svg>
<div class="a" style="left:281px;top:782px;width:14px;height:13px;background:linear-gradient(135deg,#DDE8FF,#BCD0F8);border:1px solid #B5C8F0;border-radius:2px"></div>
<svg style="left:281px;top:782px" width="14" height="13"><path d="M5 2.5l4 4-4 4" stroke="#4D6185" stroke-width="2" fill="none"/></svg>
<div class="a" style="left:134px;top:782px;width:71px;height:13px;background:linear-gradient(#C8D8FA,#B8CCF6);border:1px solid #A8BEEA;border-radius:2px"></div>
<svg style="left:165px;top:785px" width="8" height="7"><path d="M0.5 0v7M2.5 0v7M4.5 0v7M6.5 0v7" stroke="#8AA4D8"/></svg>
<div class="a" style="left:101px;top:802px;width:197px;height:171px;background:#fff;border-top:1px solid #F4F2EA;border-right:1px solid #E4E1D4"></div>
<svg style="left:0;top:0" width="1280" height="1024"><rect x="118.6" y="820" width="13" height="135" fill="#FCFCFC"/><rect x="134.6" y="820" width="13" height="135" fill="#FCFCFC"/><rect x="150.6" y="820" width="13" height="135" fill="#FCFCFC"/><rect x="166.6" y="820" width="13" height="135" fill="#FCFCFC"/><rect x="182.6" y="820" width="13" height="135" fill="#FCFCFC"/><rect x="198.6" y="820" width="13" height="135" fill="#FCFCFC"/><rect x="214.6" y="820" width="13" height="135" fill="#FCFCFC"/><rect x="230.6" y="820" width="13" height="135" fill="#FCFCFC"/><rect x="246.6" y="820" width="13" height="135" fill="#FCFCFC"/><rect x="262.6" y="820" width="13" height="135" fill="#FCFCFC"/><rect x="262.6" y="822" width="13" height="133" fill="#F2F2F2"/><rect x="102.6" y="850.5" width="13" height="3" fill="#9030E8"/><rect x="102.6" y="939" width="13" height="3" fill="#107010"/><rect x="118.6" y="850.5" width="13" height="3" fill="#9030E8"/><rect x="118.6" y="939" width="13" height="3" fill="#107010"/><rect x="134.6" y="850.5" width="13" height="3" fill="#9030E8"/><rect x="134.6" y="939" width="13" height="3" fill="#107010"/><rect x="150.6" y="850.5" width="13" height="3" fill="#9030E8"/><rect x="150.6" y="939" width="13" height="3" fill="#107010"/><rect x="166.6" y="850.5" width="13" height="3" fill="#9030E8"/><rect x="166.6" y="939" width="13" height="3" fill="#107010"/><rect x="182.6" y="850.5" width="13" height="3" fill="#9030E8"/><rect x="182.6" y="939" width="13" height="3" fill="#107010"/><rect x="198.6" y="850.5" width="13" height="3" fill="#9030E8"/><rect x="198.6" y="939" width="13" height="3" fill="#107010"/><rect x="214.6" y="850.5" width="13" height="3" fill="#9030E8"/><rect x="214.6" y="939" width="13" height="3" fill="#107010"/><rect x="230.6" y="850.5" width="13" height="3" fill="#9030E8"/><rect x="230.6" y="939" width="13" height="3" fill="#107010"/><rect x="246.6" y="850.5" width="13" height="3" fill="#9030E8"/><rect x="246.6" y="939" width="13" height="3" fill="#107010"/><rect x="262.6" y="850.5" width="13" height="3" fill="#9030E8"/><rect x="262.6" y="939" width="13" height="3" fill="#107010"/><rect x="103" y="855.5" width="13" height="1.5" fill="#555"/><rect x="103" y="861.9" width="13" height="1.5" fill="#111"/><rect x="103" y="865.8" width="13" height="1.5" fill="#111"/><rect x="103" y="872.7" width="13" height="1.5" fill="#333"/><rect x="103" y="877.8" width="13" height="1.5" fill="#444"/><rect x="103" y="881.9" width="13" height="1.5" fill="#444"/><rect x="103" y="888.0" width="13" height="1.5" fill="#666"/><rect x="103" y="895.5" width="13" height="1.5" fill="#bbb"/><rect x="103" y="905.8" width="13" height="1.5" fill="#bbb"/><rect x="103" y="917.1" width="13" height="1.5" fill="#ddd"/><rect x="103" y="923.5" width="13" height="1.5" fill="#ddd"/><rect x="103" y="929.8" width="13" height="1.5" fill="#bbb"/><rect x="103" y="936.8" width="13" height="1.5" fill="#bbb"/><defs><linearGradient id="bd" x1="0" y1="0" x2="0" y2="1"><stop offset="0" stop-color="#fff" stop-opacity="0"/><stop offset="0.5" stop-color="#000"/><stop offset="1" stop-color="#fff" stop-opacity="0"/></linearGradient><linearGradient id="sm" x1="0" y1="0" x2="0" y2="1"><stop offset="0" stop-color="#fff" stop-opacity="0"/><stop offset="1" stop-color="#999" stop-opacity="0.8"/></linearGradient><linearGradient id="sm2" x1="0" y1="0" x2="0" y2="1"><stop offset="0" stop-color="#888" stop-opacity="0.8"/><stop offset="1" stop-color="#fff" stop-opacity="0"/></linearGradient></defs><rect x="118.6" y="879" width="13" height="12" fill="url(#sm)" opacity="0.15"/><rect x="118.6" y="897" width="13" height="14" fill="url(#sm2)" opacity="0.35"/><rect x="118.6" y="889" width="13" height="10" fill="url(#bd)"/><rect x="118.6" y="892.5" width="13" height="3" fill="#000"/><rect x="134.6" y="866.4" width="13" height="26" fill="url(#sm)" opacity="0.55"/><rect x="134.6" y="898.4" width="13" height="20" fill="url(#sm2)" opacity="0.7"/><rect x="134.6" y="890.4" width="13" height="10" fill="url(#bd)"/><rect x="134.6" y="893.9" width="13" height="3" fill="#000"/><rect x="150.6" y="879.8" width="13" height="10" fill="url(#sm)" opacity="0.1"/><rect x="150.6" y="895.8" width="13" height="10" fill="url(#sm2)" opacity="0.2"/><rect x="150.6" y="887.8" width="13" height="10" fill="url(#bd)"/><rect x="150.6" y="891.3" width="13" height="3" fill="#000"/><rect x="166.6" y="868" width="13" height="22" fill="url(#sm)" opacity="0.3"/><rect x="166.6" y="896" width="13" height="18" fill="url(#sm2)" opacity="0.45"/><rect x="166.6" y="888" width="13" height="10" fill="url(#bd)"/><rect x="166.6" y="891.5" width="13" height="3" fill="#000"/><rect x="182.6" y="869" width="13" height="22" fill="url(#sm)" opacity="0.3"/><rect x="182.6" y="897" width="13" height="18" fill="url(#sm2)" opacity="0.35"/><rect x="182.6" y="889" width="13" height="10" fill="url(#bd)"/><rect x="182.6" y="892.5" width="13" height="3" fill="#000"/><rect x="198.6" y="902.4" width="13" height="16" fill="url(#sm)" opacity="0.25"/><rect x="198.6" y="924.4" width="13" height="8" fill="url(#sm2)" opacity="0.2"/><rect x="198.6" y="916.4" width="13" height="10" fill="url(#bd)"/><rect x="198.6" y="919.9" width="13" height="3" fill="#000"/><rect x="214.6" y="900.6" width="13" height="14" fill="url(#sm)" opacity="0.15"/><rect x="214.6" y="920.6" width="13" height="10" fill="url(#sm2)" opacity="0.25"/><rect x="214.6" y="912.6" width="13" height="10" fill="url(#bd)"/><rect x="214.6" y="916.1" width="13" height="3" fill="#000"/><rect x="230.6" y="901.5" width="13" height="16" fill="url(#sm)" opacity="0.2"/><rect x="230.6" y="923.5" width="13" height="8" fill="url(#sm2)" opacity="0.2"/><rect x="230.6" y="915.5" width="13" height="10" fill="url(#bd)"/><rect x="230.6" y="919.0" width="13" height="3" fill="#000"/><rect x="246.6" y="900" width="13" height="14" fill="url(#sm)" opacity="0.2"/><rect x="246.6" y="920" width="13" height="8" fill="url(#sm2)" opacity="0.35"/><rect x="246.6" y="912" width="13" height="10" fill="url(#bd)"/><rect x="246.6" y="915.5" width="13" height="3" fill="#000"/><rect x="262.6" y="848.5" width="13" height="5.5" fill="#A050F0" opacity="0.85"/></svg>
<div class="a" style="left:182px;top:807px;width:15px;height:161px;border:1px solid #2A5AB0"></div>
<div class="t" style="left:99.7px;top:957px;width:20px;text-align:center;font-size:11px">L</div>
<div class="t" style="left:115.7px;top:957px;width:20px;text-align:center;font-size:11px">1</div>
<div class="t" style="left:131.7px;top:957px;width:20px;text-align:center;font-size:11px">2</div>
<div class="t" style="left:147.7px;top:957px;width:20px;text-align:center;font-size:11px">3</div>
<div class="t" style="left:163.7px;top:957px;width:20px;text-align:center;font-size:11px">4</div>
<div class="t" style="left:179.7px;top:957px;width:20px;text-align:center;font-size:11px">5</div>
<div class="t" style="left:195.7px;top:957px;width:20px;text-align:center;font-size:11px">6</div>
<div class="t" style="left:211.7px;top:957px;width:20px;text-align:center;font-size:11px">7</div>
<div class="t" style="left:227.7px;top:957px;width:20px;text-align:center;font-size:11px">8</div>
<div class="t" style="left:243.7px;top:957px;width:20px;text-align:center;font-size:11px">9</div>
<div class="t" style="left:259.2px;top:957px;width:20px;text-align:center;font-size:11px">10</div>
<div class="t" style="left:275.2px;top:957px;width:20px;text-align:center;font-size:11px">11</div>
<div class="a" style="left:305px;top:99px;width:1px;height:873px;background:#fff"></div>
<div class="a" style="left:306px;top:100px;width:91px;height:21px;background:linear-gradient(#FCFCFE,#F4F3EE 70%,#EAE8E0);border-right:1px solid #ACA899;border-top:1px solid #fff"></div>
<div class="t" style="left:306px;top:105px;width:91px;text-align:center;font-size:10.6px">Assay Properties</div>
<div class="a" style="left:397px;top:100px;width:80px;height:21px;background:linear-gradient(#FCFCFE,#F4F3EE 70%,#EAE8E0);border-right:1px solid #ACA899;border-top:1px solid #fff"></div>
<div class="t" style="left:397px;top:105px;width:80px;text-align:center;font-size:10.6px">Chip Summary</div>
<div class="a" style="left:477px;top:100px;width:27px;height:21px;background:linear-gradient(#FCFCFE,#F4F3EE 70%,#EAE8E0);border-right:1px solid #ACA899;border-top:1px solid #fff"></div>
<div class="t" style="left:477px;top:105px;width:27px;text-align:center;font-size:10.6px">Gel</div>
<div class="a" style="left:504px;top:100px;width:97px;height:21px;background:linear-gradient(#FCFCFE,#F4F3EE 70%,#EAE8E0);border-right:1px solid #ACA899;border-top:1px solid #fff"></div>
<div class="t" style="left:504px;top:105px;width:97px;text-align:center;font-size:10.6px">Electropherogram</div>
<div class="a" style="left:601px;top:100px;width:85px;height:21px;background:linear-gradient(#FCFCFE,#F4F3EE 70%,#EAE8E0);border-right:1px solid #ACA899;border-top:1px solid #fff"></div>
<div class="t" style="left:601px;top:105px;width:85px;text-align:center;font-size:10.6px">Result Flagging</div>
<div class="a" style="left:686px;top:100px;width:55px;height:21px;background:linear-gradient(#FCFCFE,#F4F3EE 70%,#EAE8E0);border-right:1px solid #ACA899;border-top:1px solid #fff"></div>
<div class="t" style="left:686px;top:105px;width:55px;text-align:center;font-size:10.6px">Log Book</div>
<div class="a" style="left:307px;top:120px;width:665px;height:1px;background:#fff"></div>
<div class="a" style="left:307px;top:122px;width:665px;height:1px;background:#A8A597"></div>
<div class="a" style="left:307px;top:121px;width:1px;height:851px;background:#ACA899"></div>
<div class="a" style="left:318px;top:133px;width:589px;height:568px;background:linear-gradient(#FFFFFF 0%,#FBFBF8 35%,#F2F0E6 75%,#ECE9D8 100%)"></div>
<svg style="left:0;top:0" width="1280" height="1024"><path d="M349 585.5H891" stroke="#C8C8C8" stroke-dasharray="3 3"/><path d="M349 565.5H891" stroke="#C8C8C8" stroke-dasharray="3 3"/><path d="M349 525.5H891" stroke="#C8C8C8" stroke-dasharray="3 3"/><path d="M349 505.5H891" stroke="#C8C8C8" stroke-dasharray="3 3"/><path d="M349 465.5H891" stroke="#C8C8C8" stroke-dasharray="3 3"/><path d="M349 445.5H891" stroke="#C8C8C8" stroke-dasharray="3 3"/><path d="M349 405.5H891" stroke="#C8C8C8" stroke-dasharray="3 3"/><path d="M349 385.5H891" stroke="#C8C8C8" stroke-dasharray="3 3"/><path d="M349 346.5H891" stroke="#C8C8C8" stroke-dasharray="3 3"/><path d="M349 326.5H891" stroke="#C8C8C8" stroke-dasharray="3 3"/><path d="M349 286.5H891" stroke="#C8C8C8" stroke-dasharray="3 3"/><path d="M349 266.5H891" stroke="#C8C8C8" stroke-dasharray="3 3"/><path d="M349 226.5H891" stroke="#C8C8C8" stroke-dasharray="3 3"/><path d="M349 206.5H891" stroke="#C8C8C8" stroke-dasharray="3 3"/><path d="M349 166.5H891" stroke="#C8C8C8" stroke-dasharray="3 3"/><path d="M349 146.5H891" stroke="#C8C8C8" stroke-dasharray="3 3"/><path d="M349 625.5H891" stroke="#C8C8C8" stroke-dasharray="3 3"/><path d="M349 645.5H891" stroke="#C8C8C8" stroke-dasharray="3 3"/><path d="M368.5 142V661" stroke="#C8C8C8" stroke-dasharray="3 3"/><path d="M388.5 142V661" stroke="#C8C8C8" stroke-dasharray="3 3"/><path d="M412.5 142V661" stroke="#C8C8C8" stroke-dasharray="3 3"/><path d="M416.5 142V661" stroke="#C8C8C8" stroke-dasharray="3 3"/><path d="M431.5 142V661" stroke="#C8C8C8" stroke-dasharray="3 3"/><path d="M441.5 142V661" stroke="#C8C8C8" stroke-dasharray="3 3"/><path d="M459.5 142V661" stroke="#C8C8C8" stroke-dasharray="3 3"/><path d="M467.5 142V661" stroke="#C8C8C8" stroke-dasharray="3 3"/><path d="M485.5 142V661" stroke="#C8C8C8" stroke-dasharray="3 3"/><path d="M493.5 142V661" stroke="#C8C8C8" stroke-dasharray="3 3"/><path d="M518.5 142V661" stroke="#C8C8C8" stroke-dasharray="3 3"/><path d="M534.5 142V661" stroke="#C8C8C8" stroke-dasharray="3 3"/><path d="M564.5 142V661" stroke="#C8C8C8" stroke-dasharray="3 3"/><path d="M577.5 142V661" stroke="#C8C8C8" stroke-dasharray="3 3"/><path d="M602.5 142V661" stroke="#C8C8C8" stroke-dasharray="3 3"/><path d="M612.5 142V661" stroke="#C8C8C8" stroke-dasharray="3 3"/><path d="M629.5 142V661" stroke="#C8C8C8" stroke-dasharray="3 3"/><path d="M638.5 142V661" stroke="#C8C8C8" stroke-dasharray="3 3"/><path d="M652.5 142V661" stroke="#C8C8C8" stroke-dasharray="3 3"/><path d="M657.5 142V661" stroke="#C8C8C8" stroke-dasharray="3 3"/><path d="M668.5 142V661" stroke="#C8C8C8" stroke-dasharray="3 3"/><path d="M677.5 142V661" stroke="#C8C8C8" stroke-dasharray="3 3"/><path d="M694.5 142V661" stroke="#C8C8C8" stroke-dasharray="3 3"/><path d="M703.5 142V661" stroke="#C8C8C8" stroke-dasharray="3 3"/><path d="M719.5 142V661" stroke="#C8C8C8" stroke-dasharray="3 3"/><path d="M724.5 142V661" stroke="#C8C8C8" stroke-dasharray="3 3"/><path d="M737.5 142V661" stroke="#C8C8C8" stroke-dasharray="3 3"/><path d="M745.5 142V661" stroke="#C8C8C8" stroke-dasharray="3 3"/><path d="M762.5 142V661" stroke="#C8C8C8" stroke-dasharray="3 3"/><path d="M768.5 142V661" stroke="#C8C8C8" stroke-dasharray="3 3"/><path d="M813.5 142V661" stroke="#C8C8C8" stroke-dasharray="3 3"/><path d="M851.5 142V661" stroke="#C8C8C8" stroke-dasharray="3 3"/><path d="M341 605.5H891" stroke="#A2A2AA"/><path d="M341 545.5H891" stroke="#A2A2AA"/><path d="M341 485.5H891" stroke="#A2A2AA"/><path d="M341 425.5H891" stroke="#A2A2AA"/><path d="M341 366.5H891" stroke="#A2A2AA"/><path d="M341 306.5H891" stroke="#A2A2AA"/><path d="M341 246.5H891" stroke="#A2A2AA"/><path d="M341 186.5H891" stroke="#A2A2AA"/><path d="M408.5 142V661" stroke="#A2A2AA"/><path d="M421.5 142V661" stroke="#A2A2AA"/><path d="M451.5 142V661" stroke="#A2A2AA"/><path d="M477.5 142V661" stroke="#A2A2AA"/><path d="M502.5 142V661" stroke="#A2A2AA"/><path d="M551.5 142V661" stroke="#A2A2AA"/><path d="M592.5 142V661" stroke="#A2A2AA"/><path d="M622.5 142V661" stroke="#A2A2AA"/><path d="M647.5 142V661" stroke="#A2A2AA"/><path d="M663.5 142V661" stroke="#A2A2AA"/><path d="M685.5 142V661" stroke="#A2A2AA"/><path d="M714.5 142V661" stroke="#A2A2AA"/><path d="M729.5 142V661" stroke="#A2A2AA"/><path d="M755.5 142V661" stroke="#A2A2AA"/><path d="M773.5 142V661" stroke="#A2A2AA"/><path d="M348.75 142V662" stroke="#CC0000" stroke-width="1.5"/><rect x="348" y="661" width="543" height="2" fill="#000"/><rect x="408" y="663" width="2" height="6" fill="#000"/><rect x="421" y="663" width="2" height="6" fill="#000"/><rect x="451" y="663" width="2" height="6" fill="#000"/><rect x="477" y="663" width="2" height="6" fill="#000"/><rect x="502" y="663" width="2" height="6" fill="#000"/><rect x="551" y="663" width="2" height="6" fill="#000"/><rect x="592" y="663" width="2" height="6" fill="#000"/><rect x="622" y="663" width="2" height="6" fill="#000"/><rect x="647" y="663" width="2" height="6" fill="#000"/><rect x="663" y="663" width="2" height="6" fill="#000"/><rect x="685" y="663" width="2" height="6" fill="#000"/><rect x="714" y="663" width="2" height="6" fill="#000"/><rect x="729" y="663" width="2" height="6" fill="#000"/><rect x="755" y="663" width="2" height="6" fill="#000"/><rect x="773" y="663" width="2" height="6" fill="#000"/><path d="M341 605.5H349" stroke="#CC0000"/><path d="M341 545.5H349" stroke="#CC0000"/><path d="M341 485.5H349" stroke="#CC0000"/><path d="M341 425.5H349" stroke="#CC0000"/><path d="M341 366.5H349" stroke="#CC0000"/><path d="M341 306.5H349" stroke="#CC0000"/><path d="M341 246.5H349" stroke="#CC0000"/><path d="M341 186.5H349" stroke="#CC0000"/><polyline fill="none" stroke="#CC1212" stroke-width="1.2" points="342.0,604.5 343.0,604.3 344.0,605.1 345.0,604.1 346.0,604.9 347.0,604.6 348.0,604.2 349.0,604.9 350.0,604.1 351.0,604.8 352.0,604.2 353.0,604.3 354.0,604.8 355.0,605.5 356.0,604.4 357.0,604.5 358.0,605.2 359.0,605.7 360.0,605.1 361.0,604.9 362.0,605.9 363.0,604.4 364.0,605.8 365.0,604.9 366.0,604.7 367.0,604.7 368.0,605.1 369.0,606.0 370.0,605.0 371.0,605.7 372.0,605.8 373.0,605.4 374.0,605.8 375.0,605.1 376.0,605.1 377.0,605.4 378.0,606.2 379.0,605.8 380.0,605.7 381.0,606.2 382.0,606.0 383.0,605.8 384.0,606.7 385.0,606.6 386.0,605.9 387.0,606.5 388.0,606.5 389.0,607.1 390.0,606.9 391.0,606.3 392.0,607.4 393.0,606.1 394.0,606.6 395.0,607.2 396.0,606.3 397.0,606.9 398.0,606.3 399.0,607.4 400.0,607.8 403.0,605.0 404.5,600.0 405.5,590.0 406.2,576.0 406.4,470.0 407.4,467.0 407.7,366.0 408.2,358.0 408.7,366.0 408.9,467.0 409.8,470.0 410.0,576.0 410.6,590.0 411.5,598.0 413.0,602.0 415.5,603.5 418.0,603.0 420.0,602.0 422.0,604.0 424.0,606.1 425.0,606.7 426.0,605.7 427.0,606.5 428.0,606.3 429.0,606.3 430.0,606.2 431.0,606.9 432.0,607.1 433.0,606.3 434.0,606.7 435.0,605.6 436.0,606.8 437.0,606.8 438.0,607.4 439.0,607.2 440.0,606.2 441.0,606.4 442.0,607.0 443.0,605.9 444.0,606.7 445.0,606.2 446.0,606.2 447.0,606.1 448.0,607.4 449.0,606.3 450.0,606.5 451.0,606.8 452.0,607.7 453.0,606.3 454.0,607.0 455.0,607.3 456.0,607.9 457.0,607.8 458.0,607.9 459.0,606.9 460.0,607.2 461.0,607.1 462.0,608.1 463.0,608.3 464.0,606.8 465.0,606.9 466.0,607.1 467.0,607.1 468.0,607.6 469.0,607.8 470.0,607.2 471.0,606.8 472.0,607.6 473.0,607.5 474.0,607.9 475.0,608.6 476.0,608.2 477.0,607.9 478.0,608.1 479.0,608.3 480.0,607.2 481.0,608.7 482.0,608.5 483.0,608.7 484.0,608.6 485.0,607.9 486.0,607.9 487.0,607.4 488.0,608.4 489.0,607.4 490.0,607.4 491.0,607.7 492.0,607.7 493.0,608.0 494.0,607.5 495.0,607.4 496.0,607.7 497.0,607.7 498.0,608.1 499.0,607.6 500.0,609.1 501.0,608.7 502.0,607.8 503.0,608.1 504.0,607.9 505.0,607.7 506.0,607.0 507.0,608.0 508.0,608.0 509.0,606.8 510.0,606.5 511.0,605.5 512.0,605.3 513.0,605.4 514.0,604.9 515.0,605.5 516.0,604.0 517.0,603.4 518.0,604.7 519.0,603.6 520.0,602.6 521.0,603.1 522.0,602.0 523.0,602.7 524.0,603.3 525.0,602.8 526.0,602.3 527.0,601.3 528.0,601.3 529.0,600.7 530.0,601.6 531.0,600.9 532.0,601.2 533.0,600.1 534.0,599.7 535.0,600.6 536.0,600.5 537.0,600.0 538.0,599.6 539.0,599.2 540.0,598.8 541.0,597.5 542.0,597.7 543.0,597.1 544.0,596.2 545.0,595.8 546.0,595.9 547.0,595.6 548.0,596.0 549.0,596.2 550.0,594.9 551.0,595.3 552.0,594.9 553.0,594.3 554.0,592.8 555.0,592.0 556.0,591.5 557.0,591.0 558.0,590.5 559.0,590.7 560.0,590.7 561.0,589.9 562.0,588.5 563.0,588.0 564.0,587.5 565.0,585.5 566.0,585.8 567.0,585.5 568.0,584.5 569.0,583.3 570.0,581.6 571.0,579.8 572.0,579.7 573.0,577.7 574.0,576.2 575.0,574.2 578.0,560.0 580.6,541.8 583.0,520.0 586.4,474.5 589.0,410.0 591.8,339.7 595.0,250.0 598.0,200.0 600.0,187.0 601.0,185.5 602.0,188.0 604.0,220.0 606.0,290.0 608.4,339.7 611.0,410.0 614.0,474.5 616.0,515.0 617.8,541.8 620.0,565.0 622.0,578.0 625.0,582.0 625.0,581.8 626.0,582.4 627.0,584.0 628.0,584.2 629.0,583.8 630.0,584.3 631.0,584.8 632.0,586.5 633.0,586.8 634.0,586.0 635.0,587.6 636.0,588.3 637.0,588.1 638.0,587.9 639.0,588.7 640.0,588.3 641.0,588.4 642.0,590.4 643.0,590.2 644.0,590.2 645.0,591.3 646.0,590.7 647.0,591.8 648.0,592.0 649.0,591.2 650.0,591.6 651.0,591.8 652.0,591.9 653.0,592.8 654.0,592.4 655.0,592.9 656.0,592.5 657.0,594.1 658.0,593.3 659.0,593.7 660.0,594.2 661.0,595.1 662.0,594.7 663.0,596.0 664.0,595.6 665.0,596.1 666.0,596.4 667.0,595.9 668.0,597.1 669.0,597.0 670.0,597.1 671.0,599.2 672.0,598.7 673.0,599.8 674.0,600.9 675.0,601.2 676.0,601.4 677.0,602.4 678.0,603.1 679.0,603.9 680.0,603.1 681.0,604.4 682.0,604.2 683.0,604.7 684.0,606.0 685.0,605.9 686.0,606.4 687.0,607.2 688.0,607.9 689.0,607.5 690.0,608.2 691.0,608.2 692.0,608.4 693.0,608.9 694.0,608.7 695.0,609.1 696.0,609.2 697.0,610.2 698.0,610.0 699.0,610.5 700.0,610.8 701.0,609.7 702.0,610.3 703.0,611.0 704.0,610.9 705.0,609.8 706.0,609.8 707.0,610.5 708.0,609.9 709.0,610.3 710.0,610.1 711.0,611.2 712.0,611.5 713.0,611.8 714.0,610.5 715.0,611.6 716.0,611.6 717.0,610.8 718.0,612.2 719.0,612.4 720.0,611.2 721.0,612.6 722.0,611.7 723.0,611.9 724.0,612.9 725.0,612.7 726.0,611.6 727.0,612.1 728.0,612.4 729.0,612.1 730.0,612.0 731.0,612.2 732.0,613.0 733.0,611.8 734.0,612.9 735.0,612.7 736.0,612.0 737.0,612.7 738.0,613.3 739.0,613.1 740.0,612.4 741.0,614.1 742.0,613.8 743.0,614.2 744.0,612.7 745.0,613.1 746.0,612.7 747.0,614.1 748.0,613.3 749.0,613.1 750.0,613.7 751.0,614.6 752.0,614.5 753.0,613.6 754.0,613.5 755.0,614.9 756.0,614.4 757.0,614.7 758.0,613.6 759.0,613.6 760.0,614.8 761.0,614.4 762.0,613.9 763.0,615.5 764.0,615.1 765.0,615.5 768.0,612.0 770.0,600.0 772.0,585.0 773.8,577.5 775.5,585.0 777.5,600.0 779.0,607.0 781.0,611.0 785.0,613.0 789.0,614.5 789.0,613.8 790.0,615.3 791.0,614.3 792.0,615.8 793.0,615.3 794.0,615.4 795.0,615.9 796.0,616.8 797.0,615.9 798.0,616.0 799.0,616.8 800.0,616.6 801.0,616.4 802.0,616.5 803.0,616.4 804.0,616.7 805.0,616.9 806.0,616.9 807.0,617.6 808.0,616.9 809.0,617.3 810.0,616.8 811.0,617.1 812.0,616.6 813.0,617.0 814.0,616.7 815.0,617.9 816.0,617.6 817.0,617.1 818.0,617.6 819.0,618.3 820.0,617.0 821.0,618.2 822.0,617.6 823.0,617.8 824.0,618.3 825.0,617.7 826.0,617.9 827.0,618.2 828.0,618.7 829.0,617.7 830.0,618.5 831.0,618.4 832.0,618.3 833.0,617.9 834.0,617.9 835.0,617.5 836.0,617.6 837.0,617.5 838.0,618.7 839.0,617.9 840.0,617.8 841.0,617.7 842.0,618.9 843.0,619.0 844.0,618.7 845.0,618.2 846.0,618.1 847.0,618.2 848.0,618.5 849.0,618.1 850.0,618.6 851.0,618.3 852.0,619.5 853.0,619.5 854.0,618.9 855.0,618.4 856.0,619.6 857.0,618.6 858.0,618.7 859.0,618.2 860.0,618.8 861.0,619.0 862.0,619.1 863.0,618.6 864.0,619.1 865.0,618.4 866.0,618.8 867.0,618.6 868.0,619.1 869.0,618.6 870.0,618.6 871.0,619.0 872.0,619.0 873.0,619.6 874.0,619.5 875.0,619.9 876.0,619.8 877.0,619.9 878.0,620.2 879.0,619.4 880.0,619.4 881.0,620.5 882.0,619.1 883.0,620.1 884.0,620.0 885.0,619.1 886.0,620.4 887.0,620.5 888.0,620.1 889.0,620.3 890.0,620.5"/><path d="M401 558.5H415" stroke="#2E6E2E" stroke-width="1"/><path d="M519 598.5H678" stroke="#2E7A3E" stroke-width="1.2"/><path d="M762 609H789" stroke="#2E7A6E" stroke-width="1.2"/><path d="M401 607.5L415.4 603.4" stroke="#2040E0" stroke-width="1.3"/><path d="M519 604.5H600L678 605.3" stroke="#0000E0" stroke-width="1.6"/><path d="M762.5 616L789.4 614.5" stroke="#2040E0" stroke-width="1.5"/><circle cx="401.5" cy="607.5" r="2.8" fill="#30E030"/><circle cx="415.4" cy="603.4" r="3" fill="#0000F0"/><circle cx="518.8" cy="604.5" r="3" fill="#0000F0"/><circle cx="678.4" cy="605.3" r="3" fill="#0000F0"/><circle cx="762.5" cy="616" r="3" fill="#0000F0"/><circle cx="789.4" cy="614.5" r="3" fill="#0000F0"/><path d="M403 355.5H413.5L408.2 366z" fill="#1A1A70"/></svg>
<div class="t" style="left:401px;top:341px;font-size:11px;color:#208020;transform:rotate(-60deg);transform-origin:50% 50%">35</div>
<div class="t" style="left:594px;top:168px;font-size:11px;color:#000;transform:rotate(-55deg);transform-origin:50% 50%">428</div>
<div class="t" style="left:766px;top:561px;font-size:11px;color:#9040E0;transform:rotate(-55deg);transform-origin:50% 50%">10...</div>
<div class="t" style="left:319px;top:137px;font-size:11px;color:#CC0000;">[FU]</div>
<div class="t" style="left:300px;top:600px;width:39px;text-align:right;font-size:11px;color:#CC0000">0</div>
<div class="t" style="left:300px;top:540px;width:39px;text-align:right;font-size:11px;color:#CC0000">50</div>
<div class="t" style="left:300px;top:480px;width:39px;text-align:right;font-size:11px;color:#CC0000">100</div>
<div class="t" style="left:300px;top:420px;width:39px;text-align:right;font-size:11px;color:#CC0000">150</div>
<div class="t" style="left:300px;top:360px;width:39px;text-align:right;font-size:11px;color:#CC0000">200</div>
<div class="t" style="left:300px;top:300px;width:39px;text-align:right;font-size:11px;color:#CC0000">250</div>
<div class="t" style="left:300px;top:240px;width:39px;text-align:right;font-size:11px;color:#CC0000">300</div>
<div class="t" style="left:300px;top:181px;width:39px;text-align:right;font-size:11px;color:#CC0000">350</div>
<div class="t" style="left:382.5px;top:671px;width:50px;text-align:center;font-size:11px">35</div>
<div class="t" style="left:426px;top:671px;width:50px;text-align:center;font-size:11px">100</div>
<div class="t" style="left:476.5px;top:671px;width:50px;text-align:center;font-size:11px">200</div>
<div class="t" style="left:526px;top:671px;width:50px;text-align:center;font-size:11px">300</div>
<div class="t" style="left:567px;top:671px;width:50px;text-align:center;font-size:11px">400</div>
<div class="t" style="left:622px;top:671px;width:50px;text-align:center;font-size:11px">600</div>
<div class="t" style="left:660px;top:671px;width:50px;text-align:center;font-size:11px">1000</div>
<div class="t" style="left:703.5px;top:671px;width:50px;text-align:center;font-size:11px">3000</div>
<div class="t" style="left:748px;top:671px;width:50px;text-align:center;font-size:11px">10380</div>
<div class="t" style="left:865px;top:671px;width:50px;text-align:center;font-size:11px">[bp]</div>
<div class="t" style="left:700px;top:135px;width:186px;text-align:right;font-size:11px">Dilkes- Arabidopsis 10...</div>
<div class="t" style="left:700px;top:151px;width:186px;text-align:right;font-size:11px">after 10 cycles PCR</div>
<div class="a" style="left:775px;top:534px;width:77px;height:30px;background:#FFFFE1;border:1px solid #000"></div>
<div class="t" style="left:779px;top:537px;font-size:10.6px;color:#000;">Time: 112.86 s</div>
<div class="t" style="left:779px;top:550px;font-size:10.6px;color:#000;">Size: 10241 bp</div>
<div class="a" style="left:916px;top:127px;width:46px;height:574px;background:#FFFFFF"></div>
<div class="a" style="left:918px;top:128px;width:42px;height:551px;background:linear-gradient(#FFFFFF 0%,#FBFBFB 25%,#F4F4F4 40%,#ECECEC 46%,#EAEAEA 50.3%,#C8C8C8 51.6%,#505050 53%,#000 54%,#000 55.9%,#606060 57.2%,#CCCCCC 58.5%,#E4E4E4 59.8%,#EAEAEA 66%,#F2F2F2 76%,#F6F6F6 82%,#F6F6F6 100%)"></div>
<div class="a" style="left:918px;top:258px;width:42px;height:3px;background:#8A2BE2"></div>
<div class="a" style="left:918px;top:617px;width:42px;height:3px;background:#107010"></div>
<div class="t" style="left:916px;top:681px;width:46px;text-align:center;font-size:11px">5</div>
<svg style="left:972px;top:492px" width="6" height="110"><path d="M1 0l4 4-4 4z" fill="#1A2A6A"/><path d="M1 102l4 4-4 4z" fill="#1A2A6A"/><path d="M3.5 9V101" stroke="#555" stroke-dasharray="1 1"/></svg>
<div class="a" style="left:315px;top:705px;width:652px;height:242px;border-top:1px solid #fff;border-left:1px solid #fff;border-right:1px solid #ACA899;border-bottom:1px solid #ACA899;box-shadow:inset -1px -1px 0 #fff"></div>
<div class="a" style="left:317px;top:708px;width:646px;height:235px;border-left:1px solid #ACA899;border-top:1px solid #ACA899"></div>
<svg style="left:0;top:0" width="1280" height="1024"><path d="M317.5 708V776" stroke="#ACA899"/><path d="M339.5 708V776" stroke="#ACA899"/><path d="M361.5 708V776" stroke="#ACA899"/><path d="M421.5 708V776" stroke="#ACA899"/><path d="M502.5 708V776" stroke="#ACA899"/><path d="M597.5 708V776" stroke="#ACA899"/><path d="M679.5 708V776" stroke="#ACA899"/><path d="M962.5 708V776" stroke="#ACA899"/><path d="M317 708.5H963" stroke="#ACA899"/><path d="M317 725.5H963" stroke="#ACA899"/><path d="M317 742.5H963" stroke="#ACA899"/><path d="M317 759.5H963" stroke="#ACA899"/><path d="M317 776.5H963" stroke="#ACA899"/><path d="M331 730v8l5-4z" fill="#000"/><path d="M353 728v12.5l-7.5-6.25z" fill="#0E7A0E"/><path d="M347 762.5v12.5l7.5-6.25z" fill="#8A3AE8"/></svg>
<div class="t" style="left:340px;top:712px;width:100px;text-align:center;font-size:11px">Size [bp]</div>
<div class="t" style="left:411px;top:712px;width:100px;text-align:center;font-size:11px">Conc. [pg/µl]</div>
<div class="t" style="left:499px;top:712px;width:100px;text-align:center;font-size:11px">Molarity [pmol/l]</div>
<div class="t" style="left:587.5px;top:712px;width:100px;text-align:center;font-size:11px">Observations</div>
<div class="t" style="left:339px;top:729px;width:80px;text-align:right;font-size:11px">35</div>
<div class="t" style="left:420px;top:729px;width:80px;text-align:right;font-size:11px">125.00</div>
<div class="t" style="left:515px;top:729px;width:80px;text-align:right;font-size:11px">5,411.3</div>
<div class="t" style="left:598px;top:729px;font-size:11px;color:#000;">Lower Marker</div>
<div class="t" style="left:339px;top:746px;width:80px;text-align:right;font-size:11px">428</div>
<div class="t" style="left:420px;top:746px;width:80px;text-align:right;font-size:11px">7,738.73</div>
<div class="t" style="left:515px;top:746px;width:80px;text-align:right;font-size:11px">27,392.0</div>
<div class="t" style="left:339px;top:763px;width:80px;text-align:right;font-size:11px">10,380</div>
<div class="t" style="left:420px;top:763px;width:80px;text-align:right;font-size:11px">75.00</div>
<div class="t" style="left:515px;top:763px;width:80px;text-align:right;font-size:11px">10.9</div>
<div class="t" style="left:598px;top:763px;font-size:11px;color:#000;">Upper Marker</div>
<div class="t" style="left:319px;top:746px;font-size:11px;color:#000;">2</div>
<div class="t" style="left:319px;top:763px;font-size:11px;color:#000;">3</div>
<div class="a" style="left:315px;top:946px;width:46px;height:19px;background:#ECE9D8;border-top:1px solid #ACA899;border-left:1px solid #fff;border-right:1px solid #ACA899;border-bottom:1px solid #ACA899"></div>
<div class="t" style="left:315px;top:950px;width:46px;text-align:center;font-size:11px"><u>R</u>esults</div>
<div class="a" style="left:361px;top:945px;width:63px;height:21px;background:#ECE9D8;border-left:1px solid #fff;border-right:1px solid #716F64;border-bottom:1px solid #716F64"></div>
<div class="t" style="left:361px;top:950px;width:63px;text-align:center;font-size:11px"><u>P</u>eak Table</div>
<div class="a" style="left:424px;top:946px;width:74px;height:19px;background:#ECE9D8;border-top:1px solid #ACA899;border-left:1px solid #fff;border-right:1px solid #ACA899;border-bottom:1px solid #ACA899"></div>
<div class="t" style="left:424px;top:950px;width:74px;text-align:center;font-size:11px">Re<u>g</u>ion Table</div>
<div class="a" style="left:498px;top:946px;width:47px;height:19px;background:#ECE9D8;border-top:1px solid #ACA899;border-left:1px solid #fff;border-right:1px solid #ACA899;border-bottom:1px solid #ACA899"></div>
<div class="t" style="left:498px;top:950px;width:47px;text-align:center;font-size:11px"><u>L</u>egend</div>
<div class="a" style="left:305px;top:971px;width:668px;height:1px;background:#fff"></div>
<div class="a" style="left:305px;top:974px;width:668px;height:1px;background:#ACA899"></div>
<div class="a" style="left:972px;top:120px;width:1px;height:852px;background:#fff"></div>
<div class="a" style="left:981px;top:123px;width:298px;height:851px;border-top:1px solid #716F64;border-left:1px solid #716F64;border-right:1px solid #fff;border-bottom:1px solid #716F64;box-shadow:inset 1px 1px 0 #fff"></div>
<div class="a" style="left:987px;top:147px;width:284px;height:819px;border:1px solid #ACA899;border-top-color:#fff;border-left-color:#fff;box-shadow:1px 1px 0 #fff"></div>
<div class="a" style="left:988px;top:127px;width:38px;height:21px;background:#ECE9D8;border-top:1px solid #fff;border-left:1px solid #fff;border-right:1px solid #716F64"></div>
<div class="t" style="left:991px;top:133px;font-size:11.5px;color:#000;font-weight:bold">Local</div>
<div class="a" style="left:1026px;top:129px;width:48px;height:18px;background:#ECE9D8;border-top:1px solid #fff;border-right:1px solid #716F64;border-bottom:1px solid #fff"></div>
<div class="t" style="left:1035px;top:133px;font-size:11px;color:#000;">Global</div>
<div class="a" style="left:993px;top:154px;width:169px;height:20px;background:#fff;border:1px solid #716F64;border-right-color:#fff;border-bottom-color:#fff;box-shadow:inset 1px 1px 0 #404040"></div>
<div class="a" style="left:1145px;top:156px;width:16px;height:16px;background:#ECE9D8;border:1px solid #fff;border-right-color:#716F64;border-bottom-color:#716F64"></div>
<svg style="left:1149px;top:162px" width="8" height="5"><path d="M0 0H8L4 4.5Z" fill="#000"/></svg>
<div class="t" style="left:996px;top:159px;font-size:11px;color:#000;">Normal</div>
<div class="a" style="left:1168px;top:154px;width:96px;height:21px;background:#ECE9D8;border:1px solid #fff;border-right-color:#716F64;border-bottom-color:#716F64;box-shadow:inset -1px -1px 0 #ACA899"></div>
<div class="t" style="left:1168px;top:158px;width:96px;text-align:center;font-size:11px">Collapse</div>
<div class="a" style="left:990px;top:216px;width:276px;height:68px;background:#fff"></div>
<div class="t" style="left:991px;top:185px;font-size:11px;color:#000;">Integration Start Time [s]</div>
<div class="t" style="left:1151px;top:185px;font-size:11px;color:#000;">33.05</div>
<div class="t" style="left:991px;top:202px;font-size:11px;color:#000;">Integration End Time [s]</div>
<div class="t" style="left:1151px;top:202px;font-size:11px;color:#000;">137</div>
<div class="a" style="left:990px;top:232px;width:276px;height:1px;background:#F0EFEA"></div>
<div class="t" style="left:991px;top:219px;font-size:11px;color:#000;">Slope Threshold</div>
<div class="t" style="left:1151px;top:219px;font-size:11px;color:#000;">0.8</div>
<div class="a" style="left:990px;top:249px;width:276px;height:1px;background:#F0EFEA"></div>
<div class="t" style="left:991px;top:236px;font-size:11px;color:#000;">Area Threshold</div>
<div class="t" style="left:1151px;top:236px;font-size:11px;color:#000;">0.1</div>
<div class="a" style="left:990px;top:266px;width:276px;height:1px;background:#F0EFEA"></div>
<div class="t" style="left:991px;top:253px;font-size:11px;color:#000;">Height Threshold [FU]</div>
<div class="t" style="left:1151px;top:253px;font-size:11px;color:#000;">5</div>
<div class="a" style="left:990px;top:283px;width:276px;height:1px;background:#F0EFEA"></div>
<div class="t" style="left:991px;top:270px;font-size:11px;color:#000;">Width Threshold [s]</div>
<div class="t" style="left:1151px;top:270px;font-size:11px;color:#000;">0.6</div>
<div class="a" style="left:1149px;top:216px;width:1px;height:68px;background:#F0EFEA"></div>
<div class="a" style="left:1146px;top:938px;width:58px;height:23px;background:#ECE9D8;border:1px solid #fff;border-right-color:#716F64;border-bottom-color:#716F64;box-shadow:inset -1px -1px 0 #ACA899"></div>
<div class="t" style="left:1146px;top:943px;width:58px;text-align:center;font-size:11px;color:#ACA899">Defaults</div>
<div class="a" style="left:1208px;top:938px;width:58px;height:23px;background:#ECE9D8;border:1px solid #fff;border-right-color:#716F64;border-bottom-color:#716F64;box-shadow:inset -1px -1px 0 #ACA899"></div>
<div class="t" style="left:1208px;top:943px;width:58px;text-align:center;font-size:11px">Help</div>
</body></html>
